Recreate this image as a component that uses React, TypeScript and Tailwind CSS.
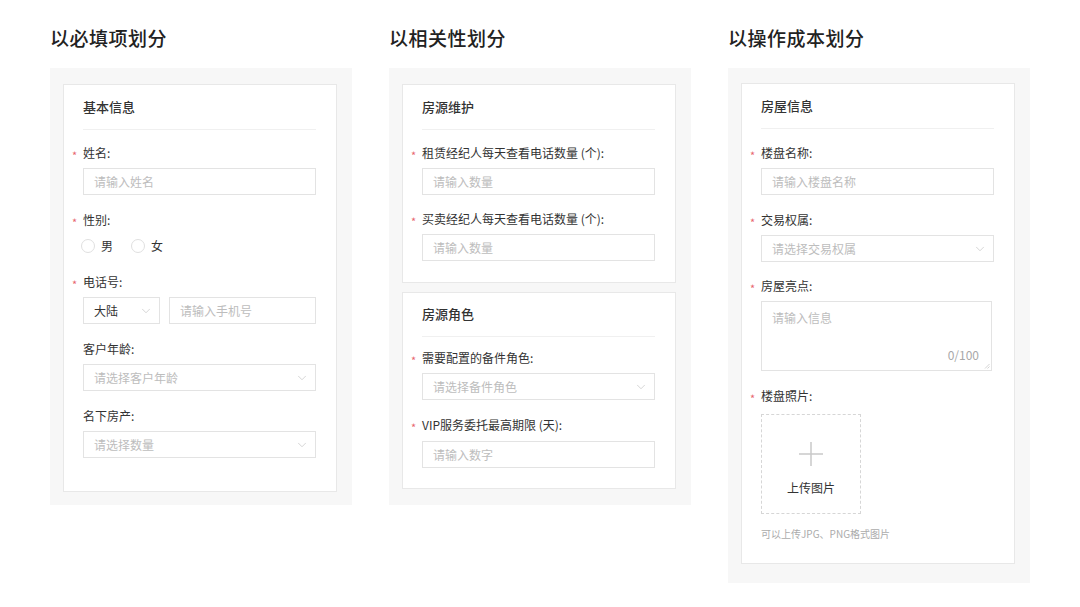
import React from 'react';
import { ChevronDown } from 'lucide-react';

const FONT = { fontFamily: '"Noto Sans CJK SC", "Noto Sans", sans-serif' };

function Label({ text, required = true }: { text: string; required?: boolean }) {
  return (
    <div className={`flex h-[18px] items-center text-[12px] leading-[18px] text-[#333] ${required ? '-ml-[11px]' : ''}`}>
      {required && <span className="w-[11px] pt-[3px] text-[11px] text-[#e8656f]">*</span>}
      <span>{text}</span>
    </div>
  );
}

function TextInput({ placeholder, className = '' }: { placeholder: string; className?: string }) {
  return (
    <div
      className={`flex h-[27px] items-center border border-[#e3e3e3] bg-white px-[10px] text-[12px] text-[#bdbdbd] ${className}`}
    >
      {placeholder}
    </div>
  );
}

function SelectBox({
  text,
  filled = false,
  className = '',
}: {
  text: string;
  filled?: boolean;
  className?: string;
}) {
  return (
    <div
      className={`flex h-[27px] items-center justify-between border border-[#e3e3e3] bg-white pl-[10px] pr-[6px] text-[12px] ${
        filled ? 'text-[#333]' : 'text-[#bdbdbd]'
      } ${className}`}
    >
      <span>{text}</span>
      <ChevronDown size={14} strokeWidth={1.2} className="text-[#c4c4c4]" />
    </div>
  );
}

function CardHeader({ title }: { title: string }) {
  return (
    <div className="border-b border-[#f0f0f0] pb-3 text-[13px] font-medium leading-5 text-[#333]">{title}</div>
  );
}

function Column({ title, children, pb }: { title: string; children: React.ReactNode; pb: string }) {
  return (
    <div className="w-[302px]">
      <h2 className="mb-4 text-[19px] font-medium leading-7 tracking-[0.5px] text-[#222]">{title}</h2>
      <div className={`flex flex-col gap-[9px] bg-[#f7f7f7] pl-[13px] pr-[15px] pt-4 ${pb}`}>{children}</div>
    </div>
  );
}

function Radio({ label }: { label: string }) {
  return (
    <div className="flex items-center gap-[6px]">
      <span className="h-[14px] w-[14px] rounded-full border border-[#e0e0e0] bg-white" />
      <span className="text-[12px] text-[#333]">{label}</span>
    </div>
  );
}

export default function App() {
  return (
    <div className="flex min-h-[607px] gap-[37px] bg-white pl-[50px] pt-6" style={FONT}>
      {/* 以必填项划分 */}
      <Column title="以必填项划分" pb="pb-[13px]">
        <div className="border border-[#e8e8e8] bg-white pb-[33px] pl-[19px] pr-5 pt-3">
          <CardHeader title="基本信息" />
          <div className="mt-[14px]">
            <Label text="姓名:" />
            <TextInput placeholder="请输入姓名" className="mt-1.5" />

            <div className="mt-4">
              <Label text="性别:" />
              <div className="-ml-[2px] mt-[7px] flex h-5 items-center gap-[18px]">
                <Radio label="男" />
                <Radio label="女" />
              </div>
            </div>

            <div className="mt-[17px]">
              <Label text="电话号:" />
              <div className="mt-1.5 flex gap-[9px]">
                <SelectBox text="大陆" filled className="w-[77px]" />
                <TextInput placeholder="请输入手机号" className="flex-1" />
              </div>
            </div>

            <div className="mt-4">
              <Label text="客户年龄:" required={false} />
              <SelectBox text="请选择客户年龄" className="mt-1.5" />
            </div>

            <div className="mt-4">
              <Label text="名下房产:" required={false} />
              <SelectBox text="请选择数量" className="mt-1.5" />
            </div>
          </div>
        </div>
      </Column>

      {/* 以相关性划分 */}
      <Column title="以相关性划分" pb="pb-4">
        <div className="border border-[#e8e8e8] bg-white pb-[21px] pl-[19px] pr-5 pt-3">
          <CardHeader title="房源维护" />
          <div className="mt-[14px]">
            <Label text="租赁经纪人每天查看电话数量 (个):" />
            <TextInput placeholder="请输入数量" className="mt-1.5" />
            <div className="mt-[15px]">
              <Label text="买卖经纪人每天查看电话数量 (个):" />
              <TextInput placeholder="请输入数量" className="mt-1.5" />
            </div>
          </div>
        </div>
        <div className="border border-[#e8e8e8] bg-white pb-5 pl-[19px] pr-5 pt-[11px]">
          <CardHeader title="房源角色" />
          <div className="mt-[12px]">
            <Label text="需要配置的备件角色:" />
            <SelectBox text="请选择备件角色" className="mt-1.5" />
            <div className="mt-[16px]">
              <Label text="VIP服务委托最高期限 (天):" />
              <TextInput placeholder="请输入数字" className="mt-[7px]" />
            </div>
          </div>
        </div>
      </Column>

      {/* 以操作成本划分 */}
      <Column title="以操作成本划分" pb="pb-[19px]">
        <div className="-mt-px border border-[#e8e8e8] bg-white pb-[22px] pl-[19px] pr-5 pt-3">
          <CardHeader title="房屋信息" />
          <div className="mt-[15px]">
            <Label text="楼盘名称:" />
            <TextInput placeholder="请输入楼盘名称" className="mt-1.5" />

            <div className="mt-4">
              <Label text="交易权属:" />
              <SelectBox text="请选择交易权属" className="mt-1.5" />
            </div>

            <div className="mt-[15px]">
              <Label text="房屋亮点:" />
              <div className="relative mt-1.5 flex h-[70px] w-[231px] flex-col justify-between border border-[#e3e3e3] bg-white px-[10px] pb-[6px] pt-[7px] text-[12px]">
                <span className="text-[#bdbdbd]">请输入信息</span>
                <span className="self-end pr-[2px] text-[#a8a8a8]">0/100</span>
                <svg className="absolute bottom-[1px] right-[1px]" width="6" height="6" viewBox="0 0 6 6">
                  <path d="M5.5 1 L1 5.5 M5.5 3.5 L3.5 5.5" stroke="#c8c8c8" strokeWidth="0.8" />
                </svg>
              </div>
            </div>

            <div className="mt-4">
              <Label text="楼盘照片:" />
              <div className="mt-[9px] flex h-[100px] w-[100px] flex-col items-center border border-dashed border-[#d6d6d6] bg-white pt-[26px]">
                <svg width="26" height="26" viewBox="0 0 26 26">
                  <path d="M13 1 V25 M1 13 H25" stroke="#c9c9c9" strokeWidth="1.5" />
                </svg>
                <span className="mt-3 text-[12px] text-[#333]">上传图片</span>
              </div>
              <p className="mt-[13px] text-[10px] leading-[14px] text-[#ababab]">可以上传JPG、PNG格式图片</p>
            </div>
          </div>
        </div>
      </Column>
    </div>
  );
}
